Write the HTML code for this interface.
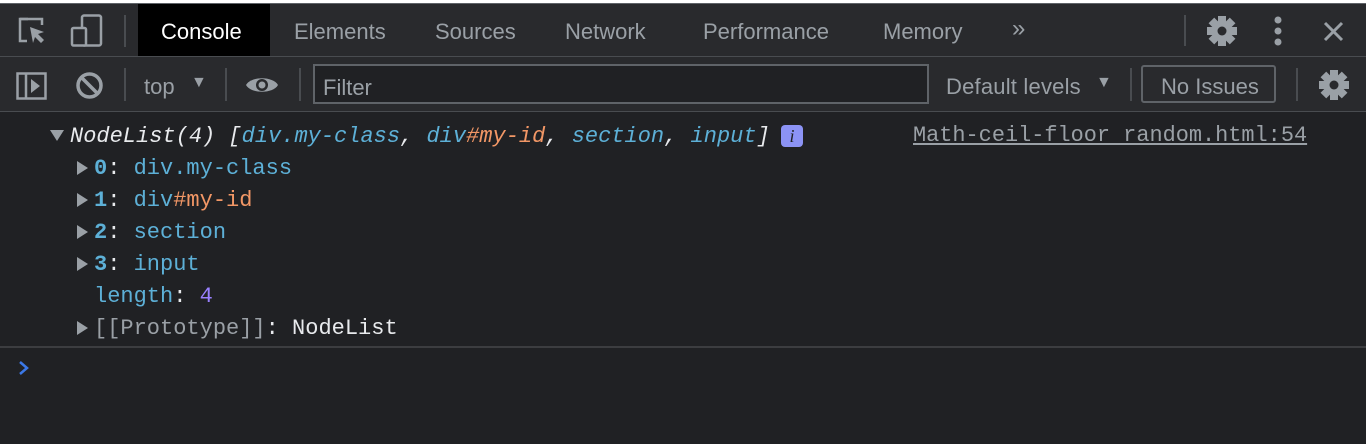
<!DOCTYPE html>
<html><head><style>
*{margin:0;padding:0;box-sizing:border-box}
body{width:1366px;height:444px;background:#202124;overflow:hidden;font-family:"Liberation Sans",sans-serif;position:relative}
.a{position:absolute}
.top{left:0;top:0;width:1366px;height:4px;background:#fff;border-bottom:1px solid #5f6368}
.tabs{left:0;top:4px;width:1366px;height:53px;background:#292a2d;border-bottom:1px solid #494c50}
.tb{left:0;top:57px;width:1366px;height:55px;background:#292a2d;border-bottom:1px solid #494c50}
.t{font-size:22px;color:#9aa0a6;white-space:nowrap}
.sep{width:2px;background:#494c50}
.m{font-family:"Liberation Mono",monospace;font-size:22px;white-space:pre;color:#e8eaed}
.tri{width:0;height:0;border-top:7px solid transparent;border-bottom:7px solid transparent;border-left:11px solid #9aa0a6}
.blue{color:#5db0d7}.key{color:#5db0d7;font-weight:bold}.or{color:#f29766}
</style></head><body>
<div class="a top"></div>
<div class="a tabs"></div>
<div class="a tb"></div>
<svg class="a" style="left:18px;top:17px" width="32" height="30" viewBox="0 0 32 30"><path d="M10 2H2v22h7" fill="none" stroke="#9aa0a6" stroke-width="2.5"/><path d="M2 2h22v6" fill="none" stroke="#9aa0a6" stroke-width="2.5"/><path d="M12 10l14 5-6 2 6 6-3 3-6-6-2 6z" fill="#9aa0a6"/></svg>
<svg class="a" style="left:70px;top:14px" width="34" height="34" viewBox="0 0 34 34"><rect x="12" y="1.5" width="19" height="30" rx="2" fill="none" stroke="#9aa0a6" stroke-width="2.5"/><rect x="2" y="14" width="14" height="17.5" rx="1.5" fill="#292a2d" stroke="#9aa0a6" stroke-width="2.5"/></svg>
<div class="a sep" style="left:124px;top:15px;height:32px"></div>
<div class="a" style="left:138px;top:4px;width:132px;height:52px;background:#000"></div>
<div class="a t" style="left:161px;top:19px;color:#fff">Console</div>
<div class="a t" style="left:294px;top:19px">Elements</div>
<div class="a t" style="left:435px;top:19px">Sources</div>
<div class="a t" style="left:565px;top:19px">Network</div>
<div class="a t" style="left:703px;top:19px">Performance</div>
<div class="a t" style="left:883px;top:19px">Memory</div>
<div class="a t" style="left:1012px;top:15px;font-size:24px">»</div>
<div class="a sep" style="left:1184px;top:15px;height:31px"></div>
<svg class="a" style="left:1206px;top:15px" width="32" height="32" viewBox="-16 -16 32 32"><g fill="#9aa0a6"><circle r="10"/><rect x="-4" y="-15" width="8" height="30"/><rect x="-4" y="-15" width="8" height="30" transform="rotate(45)"/><rect x="-4" y="-15" width="8" height="30" transform="rotate(90)"/><rect x="-4" y="-15" width="8" height="30" transform="rotate(135)"/></g><circle r="4.5" fill="#292a2d"/></svg>
<svg class="a" style="left:1271px;top:16px" width="14" height="30"><circle cx="7" cy="4" r="3.5" fill="#9aa0a6"/><circle cx="7" cy="15" r="3.5" fill="#9aa0a6"/><circle cx="7" cy="26" r="3.5" fill="#9aa0a6"/></svg>
<svg class="a" style="left:1323px;top:21px" width="21" height="21"><path d="M2 2L19 19M19 2L2 19" stroke="#9aa0a6" stroke-width="3"/></svg>
<svg class="a" style="left:16px;top:72px" width="31" height="28"><rect x="1.5" y="1.5" width="28" height="25" fill="none" stroke="#9aa0a6" stroke-width="2.5"/><path d="M10 1.5v25" stroke="#9aa0a6" stroke-width="2.5"/><path d="M15 7l9 7-9 7z" fill="#9aa0a6"/></svg>
<svg class="a" style="left:75px;top:71px" width="29" height="29"><circle cx="14.5" cy="14.5" r="11.5" fill="none" stroke="#9aa0a6" stroke-width="3.5"/><path d="M6.5 6.5l16 16" stroke="#9aa0a6" stroke-width="3.5"/></svg>
<div class="a sep" style="left:124px;top:68px;height:33px"></div>
<div class="a t" style="left:144px;top:74px">top</div>
<div class="a t" style="left:191px;top:74px;font-size:16px">▼</div>
<div class="a sep" style="left:225px;top:68px;height:33px"></div>
<svg class="a" style="left:245px;top:74px" width="34" height="22"><path d="M1 11C6 2 28 2 33 11C28 20 6 20 1 11z" fill="#9aa0a6"/><circle cx="17" cy="11" r="6" fill="#292a2d"/><circle cx="17" cy="11" r="3.5" fill="#9aa0a6"/></svg>
<div class="a sep" style="left:299px;top:68px;height:33px"></div>
<div class="a" style="left:313px;top:64px;width:616px;height:40px;background:#202124;border:2px solid #5f6368"></div>
<div class="a t" style="left:323px;top:75px">Filter</div>
<div class="a t" style="left:946px;top:74px;letter-spacing:0.2px">Default levels</div>
<div class="a t" style="left:1096px;top:74px;font-size:16px">▼</div>
<div class="a sep" style="left:1130px;top:68px;height:33px"></div>
<div class="a" style="left:1141px;top:65px;width:135px;height:38px;border:2px solid #5f6368;border-radius:3px"></div>
<div class="a t" style="left:1161px;top:74px">No Issues</div>
<div class="a sep" style="left:1296px;top:68px;height:33px"></div>
<svg class="a" style="left:1318px;top:69px" width="32" height="32" viewBox="-16 -16 32 32"><g fill="#9aa0a6"><circle r="10"/><rect x="-4" y="-15" width="8" height="30"/><rect x="-4" y="-15" width="8" height="30" transform="rotate(45)"/><rect x="-4" y="-15" width="8" height="30" transform="rotate(90)"/><rect x="-4" y="-15" width="8" height="30" transform="rotate(135)"/></g><circle r="4.5" fill="#292a2d"/></svg>
<div class="a" style="left:50px;top:130px;width:0;height:0;border-left:7px solid transparent;border-right:7px solid transparent;border-top:11px solid #9aa0a6"></div>
<div class="a m" style="left:70px;top:124px;font-style:italic">NodeList(4) [<span class="blue">div.my-class</span>, <span class="blue">div</span><span class="or">#my-id</span>, <span class="blue">section</span>, <span class="blue">input</span>]</div>
<div class="a" style="left:781px;top:125px;width:22px;height:22px;background:#8c93f5;border-radius:4px;color:#202124;font-family:'Liberation Serif',serif;font-style:italic;font-size:18px;text-align:center;line-height:22px">i</div>
<div class="a m" style="left:913px;top:123px;color:#9aa0a6;text-decoration:underline;font-size:21.9px">Math-ceil-floor random.html:54</div>
<div class="a tri" style="left:77px;top:161px"></div>
<div class="a m" style="left:94px;top:156px"><span class="key">0</span>: <span class="blue">div.my-class</span></div>
<div class="a tri" style="left:77px;top:193px"></div>
<div class="a m" style="left:94px;top:188px"><span class="key">1</span>: <span class="blue">div</span><span class="or">#my-id</span></div>
<div class="a tri" style="left:77px;top:225px"></div>
<div class="a m" style="left:94px;top:220px"><span class="key">2</span>: <span class="blue">section</span></div>
<div class="a tri" style="left:77px;top:257px"></div>
<div class="a m" style="left:94px;top:252px"><span class="key">3</span>: <span class="blue">input</span></div>
<div class="a m" style="left:94px;top:284px"><span class="blue">length</span>: <span style="color:#9980ff">4</span></div>
<div class="a tri" style="left:77px;top:321px"></div>
<div class="a m" style="left:94px;top:316px"><span style="color:#9aa0a6">[[Prototype]]</span>: NodeList</div>
<div class="a" style="left:0;top:346px;width:1366px;height:2px;background:#3c3d40"></div>
<svg class="a" style="left:18px;top:360px" width="12" height="16"><path d="M2 2l7 6-7 6" fill="none" stroke="#3b78e7" stroke-width="2.5"/></svg>
</body></html>
